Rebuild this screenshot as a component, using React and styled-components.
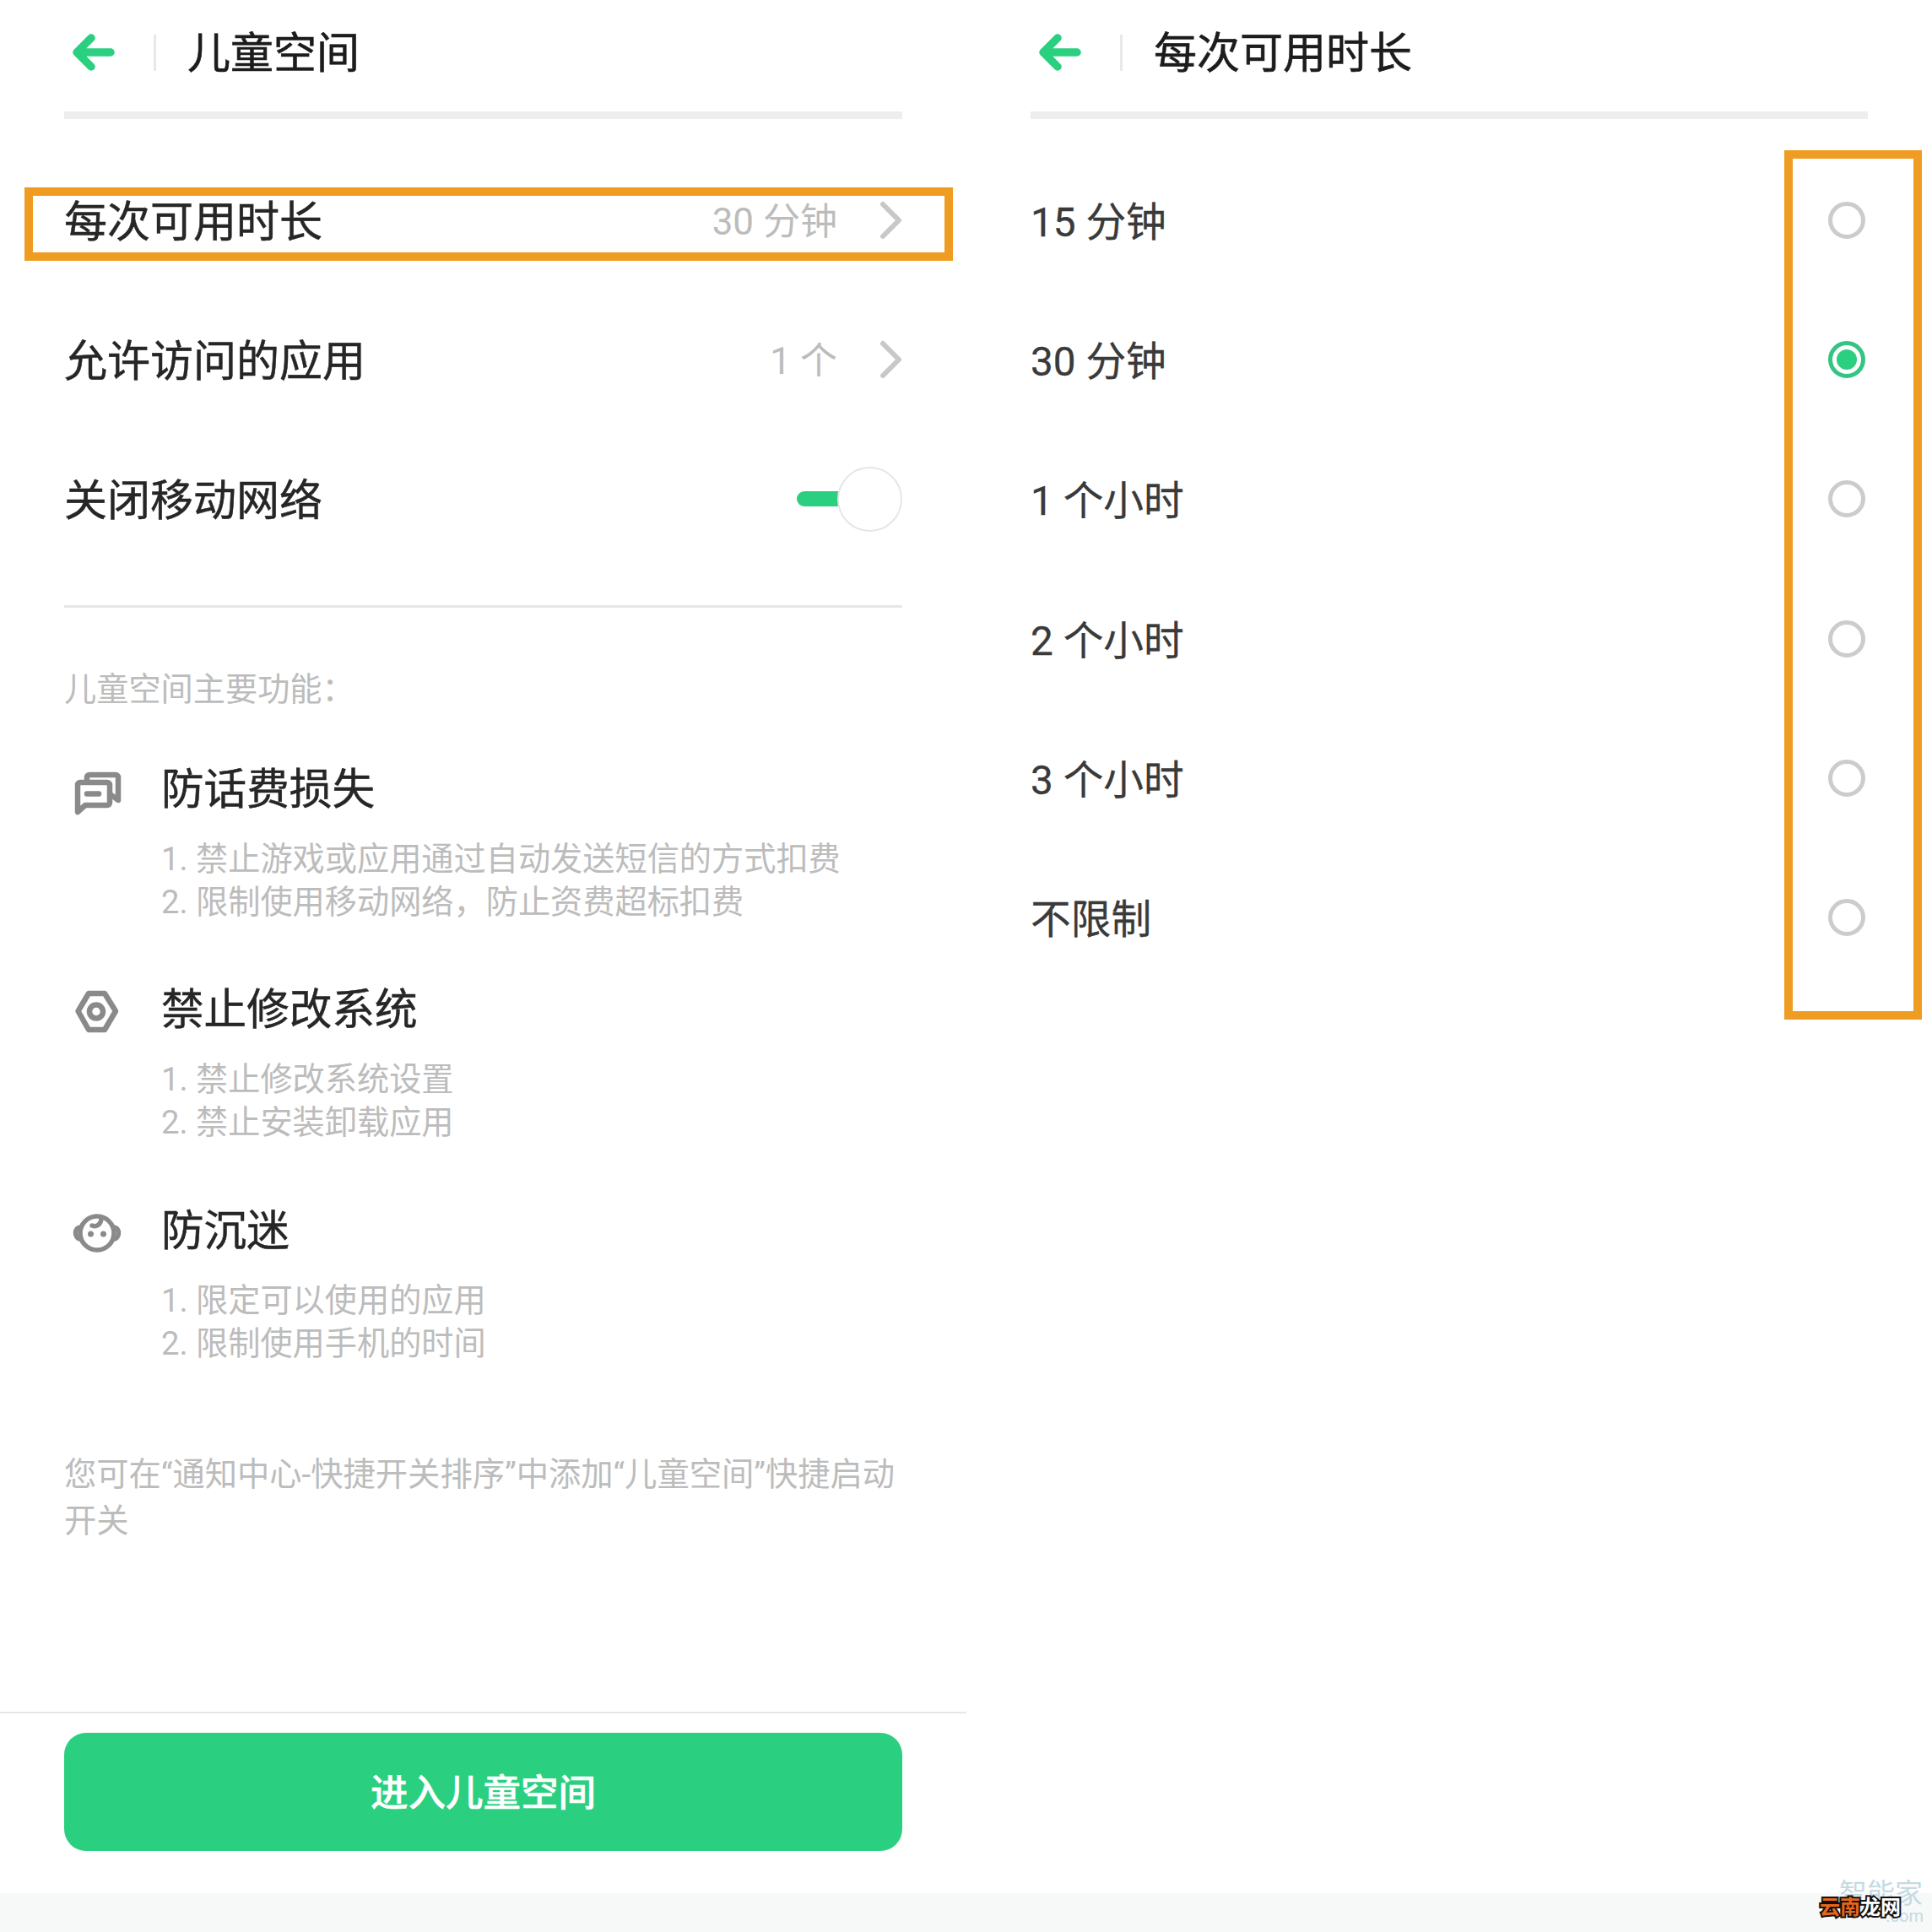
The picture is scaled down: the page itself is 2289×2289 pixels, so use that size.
import styled, { createGlobalStyle } from 'styled-components';

const GREEN = '#2bcf80';
const ORANGE = '#ef9c22';
const ICON_GREY = '#8a8a8a';
const FONT = 'Roboto, "Noto Sans CJK SC", sans-serif';

const GlobalStyle = createGlobalStyle`
  html, body {
    margin: 0;
    padding: 0;
    background: #fff;
  }
  * {
    box-sizing: border-box;
  }
`;

const Page = styled.div`
  position: relative;
  width: 2289px;
  height: 2289px;
  overflow: hidden;
  display: flex;
  flex-direction: column;
  background: #fff;
  font-family: ${FONT};
  color: #222;
`;

const Panels = styled.div`
  flex: 1;
  display: grid;
  grid-template-columns: 1145px 1144px;
`;

const Panel = styled.section`
  display: flex;
  flex-direction: column;
  min-height: 0;
`;

const Header = styled.header`
  height: 132px;
  padding: 0 0 8px 84px;
  display: flex;
  align-items: center;
`;

const BackIcon = styled.svg`
  width: 56px;
  height: 48px;
  flex: none;
`;

const HeaderDivider = styled.span`
  width: 3px;
  height: 43px;
  margin: 0 37px 0 42px;
  background: #e8e8e8;
`;

const Title = styled.h1`
  margin: 0;
  padding-top: 3px;
  font-size: 51px;
  font-weight: 400;
  line-height: 60px;
  color: #1c1c1c;
  -webkit-text-stroke: 0.6px #1c1c1c;
`;

const HeaderRule = styled.div`
  height: 9px;
  margin: 0 76px;
  background: #eeeeee;
`;

const List = styled.div`
  position: relative;
  margin: 37px 76px 0;
`;

const Row = styled.div`
  position: relative;
  height: 165.33px;
  display: flex;
  align-items: center;
  justify-content: space-between;
`;

const RowLabel = styled.span`
  padding-top: 6px;
  font-size: 51px;
  line-height: 60px;
  color: #262626;
  -webkit-text-stroke: 0.5px #262626;
`;

const OptionLabel = styled.span`
  padding-top: 6px;
  font-size: 47.7px;
  line-height: 60px;
  color: #3a3a3a;
  -webkit-text-stroke: 0.3px #3a3a3a;
`;

const RowValue = styled.span`
  display: flex;
  align-items: center;
  gap: 50px;
  font-size: 44px;
  color: #bcbcbc;
`;

const ValueText = styled.span`
  padding-bottom: 4px;
`;

const Chevron = styled.svg`
  width: 27px;
  height: 46px;
  flex: none;
`;

const Toggle = styled.span`
  display: flex;
  align-items: center;
`;

const ToggleTrack = styled.span`
  width: 52px;
  height: 18px;
  margin-right: -4px;
  border-radius: 9px 0 0 9px;
  background: ${GREEN};
`;

const ToggleKnob = styled.span`
  position: relative;
  width: 77px;
  height: 77px;
  border-radius: 50%;
  border: 2px solid #e6e6e6;
  background: #fff;
`;

const RowHighlight = styled.span`
  position: absolute;
  top: 44px;
  bottom: 34px;
  left: -47px;
  right: -60px;
  border: 10px solid ${ORANGE};
  pointer-events: none;
`;

const ColumnHighlight = styled.span`
  position: absolute;
  top: 0;
  bottom: -38px;
  right: -64px;
  width: 163px;
  border: 10px solid ${ORANGE};
  pointer-events: none;
`;

const Radio = styled.span`
  width: 44px;
  height: 44px;
  margin-right: 3px;
  border-radius: 50%;
  border: 5px solid ${(p) => (p.$checked ? '#34c583' : '#cccccc')};
  padding: 5px;
  display: flex;

  &::after {
    content: '';
    flex: 1;
    border-radius: 50%;
    background: ${(p) => (p.$checked ? GREEN : 'transparent')};
  }
`;

const Rule = styled.div`
  height: 3px;
  margin: 43.5px 76px 0;
  background: #e6e6e6;
`;

const Intro = styled.div`
  margin: 0 76px;
  padding-top: 71.5px;
  font-size: 38.2px;
  line-height: 50px;
  color: #bcbcbc;
`;

const Features = styled.div`
  margin: 64px 76px 0;
  display: flex;
  flex-direction: column;
  gap: 72.5px;
`;

const Feature = styled.article`
  display: grid;
  grid-template-columns: 115px 1fr;
`;

const FeatureIcon = styled.svg`
  grid-row: span 2;
  width: 70px;
  height: 65px;
  margin-left: 4px;
`;

const FeatureTitle = styled.h2`
  margin: 0;
  font-size: 50.6px;
  font-weight: 400;
  line-height: 60px;
  color: #262626;
  -webkit-text-stroke: 0.5px #262626;
`;

const FeatureLines = styled.p`
  margin: 27px 0 0;
  font-size: 38.2px;
  line-height: 51px;
  color: #bcbcbc;
`;

const Note = styled.p`
  margin: 101px 76px 0;
  font-size: 38.3px;
  line-height: 55px;
  color: #bcbcbc;
`;

const BottomBar = styled.div`
  margin-top: auto;
  padding: 23px 76px 50px;
  border-top: 2px solid #e6e6e6;
`;

const EnterButton = styled.button`
  width: 100%;
  height: 140px;
  padding: 0 0 5px;
  border: 0;
  border-radius: 26px;
  background: ${GREEN};
  color: #fff;
  font-family: ${FONT};
  font-size: 44.500px;
  font-weight: 500;
  -webkit-text-stroke: 0.5px #fff;
`;

const BottomBand = styled.div`
  height: 46px;
  background: #f7f8f8;
`;

const Watermark = styled.div`
  position: absolute;
  left: 2179px;
  top: 2226px;
  font-size: 33px;
  line-height: 36px;
  color: #c6dae2;
`;

const WatermarkDomain = styled.div`
  position: absolute;
  right: 10px;
  bottom: 8px;
  font-size: 20px;
  line-height: 22px;
  color: #c6dae2;
`;

const SiteMark = styled.div`
  position: absolute;
  left: 2156px;
  top: 2245px;
  font-size: 24px;
  font-weight: 700;
  line-height: 30px;
  color: #fff;
  -webkit-text-stroke: 4px #111;
  paint-order: stroke fill;
`;

const SiteAccent = styled.span`
  color: #e8651a;
`;

const features = [
  {
    title: '防话费损失',
    lines: ['1. 禁止游戏或应用通过自动发送短信的方式扣费', '2. 限制使用移动网络，防止资费超标扣费'],
    icon: (
      <g strokeWidth="6.500">
        <path d="M12 56V24a3 3 0 0 1 3-3h32a3 3 0 0 1 3 3v21a3 3 0 0 1-3 3H21z" />
        <path d="M23 20v-5a3 3 0 0 1 3-3h31a3 3 0 0 1 3 3v27l-8-6" />
        <path d="M23 34.500h14" />
      </g>
    ),
  },
  {
    title: '禁止修改系统',
    lines: ['1. 禁止修改系统设置', '2. 禁止安装卸载应用'],
    icon: (
      <g strokeWidth="6.500">
        <path d="M12.500 31 25 10h19l13 21-13 22H25z" />
        <circle cx="34" cy="31.500" r="8" />
      </g>
    ),
  },
  {
    title: '防沉迷',
    lines: ['1. 限定可以使用的应用', '2. 限制使用手机的时间'],
    icon: (
      <g strokeWidth="5.500">
        <circle cx="35" cy="32" r="20" />
        <path d="M15.500 25C11 25 9.500 29 9.500 32s2 7 6 7" />
        <path d="M54.500 25c4.500 0 6 4 6 7s-2 7-6 7" />
        <path d="M29 23c5 2 11-1 11-9" />
        <circle cx="27.500" cy="33" r="3.500" fill={ICON_GREY} stroke="none" />
        <circle cx="42.500" cy="33" r="3.500" fill={ICON_GREY} stroke="none" />
      </g>
    ),
  },
];

const durations = ['15 分钟', '30 分钟', '1 个小时', '2 个小时', '3 个小时', '不限制'];

function Back() {
  return (
    <BackIcon viewBox="0 0 56 48" fill="none" stroke={GREEN} strokeWidth="9.500" strokeLinecap="round" strokeLinejoin="round">
      <path d="M24 7 7 24l17 17M7 24h40" />
    </BackIcon>
  );
}

function More() {
  return (
    <Chevron viewBox="0 0 27 46" fill="none" stroke="#c8c8c8" strokeWidth="6" strokeLinecap="round" strokeLinejoin="round">
      <path d="M4 4l19 19L4 42" />
    </Chevron>
  );
}

function PanelHeader({ title }) {
  return (
    <>
      <Header>
        <Back />
        <HeaderDivider />
        <Title>{title}</Title>
      </Header>
      <HeaderRule />
    </>
  );
}

export default function App() {
  return (
    <Page>
      <GlobalStyle />
      <Panels>
        <Panel>
          <PanelHeader title="儿童空间" />
          <List>
            <Row>
              <RowLabel>每次可用时长</RowLabel>
              <RowValue><ValueText>30 分钟</ValueText><More /></RowValue>
              <RowHighlight />
            </Row>
            <Row>
              <RowLabel>允许访问的应用</RowLabel>
              <RowValue><ValueText>1 个</ValueText><More /></RowValue>
            </Row>
            <Row>
              <RowLabel>关闭移动网络</RowLabel>
              <Toggle>
                <ToggleTrack />
                <ToggleKnob />
              </Toggle>
            </Row>
          </List>
          <Rule />
          <Intro>儿童空间主要功能：</Intro>
          <Features>
            {features.map((feature) => (
              <Feature key={feature.title}>
                <FeatureIcon viewBox="0 0 70 65" fill="none" stroke={ICON_GREY} strokeLinecap="round" strokeLinejoin="round">
                  {feature.icon}
                </FeatureIcon>
                <FeatureTitle>{feature.title}</FeatureTitle>
                <FeatureLines>
                  {feature.lines[0]}
                  <br />
                  {feature.lines[1]}
                </FeatureLines>
              </Feature>
            ))}
          </Features>
          <Note>您可在“通知中心-快捷开关排序”中添加“儿童空间”快捷启动开关</Note>
          <BottomBar>
            <EnterButton type="button">进入儿童空间</EnterButton>
          </BottomBar>
        </Panel>
        <Panel>
          <PanelHeader title="每次可用时长" />
          <List>
            {durations.map((duration, index) => (
              <Row key={duration}>
                <OptionLabel>{duration}</OptionLabel>
                <Radio $checked={index === 1} />
              </Row>
            ))}
            <ColumnHighlight />
          </List>
        </Panel>
      </Panels>
      <BottomBand />
      <Watermark>
        智能家
      </Watermark>
      <WatermarkDomain>.com</WatermarkDomain>
      <SiteMark>
        <SiteAccent>云南</SiteAccent>龙网
      </SiteMark>
    </Page>
  );
}
